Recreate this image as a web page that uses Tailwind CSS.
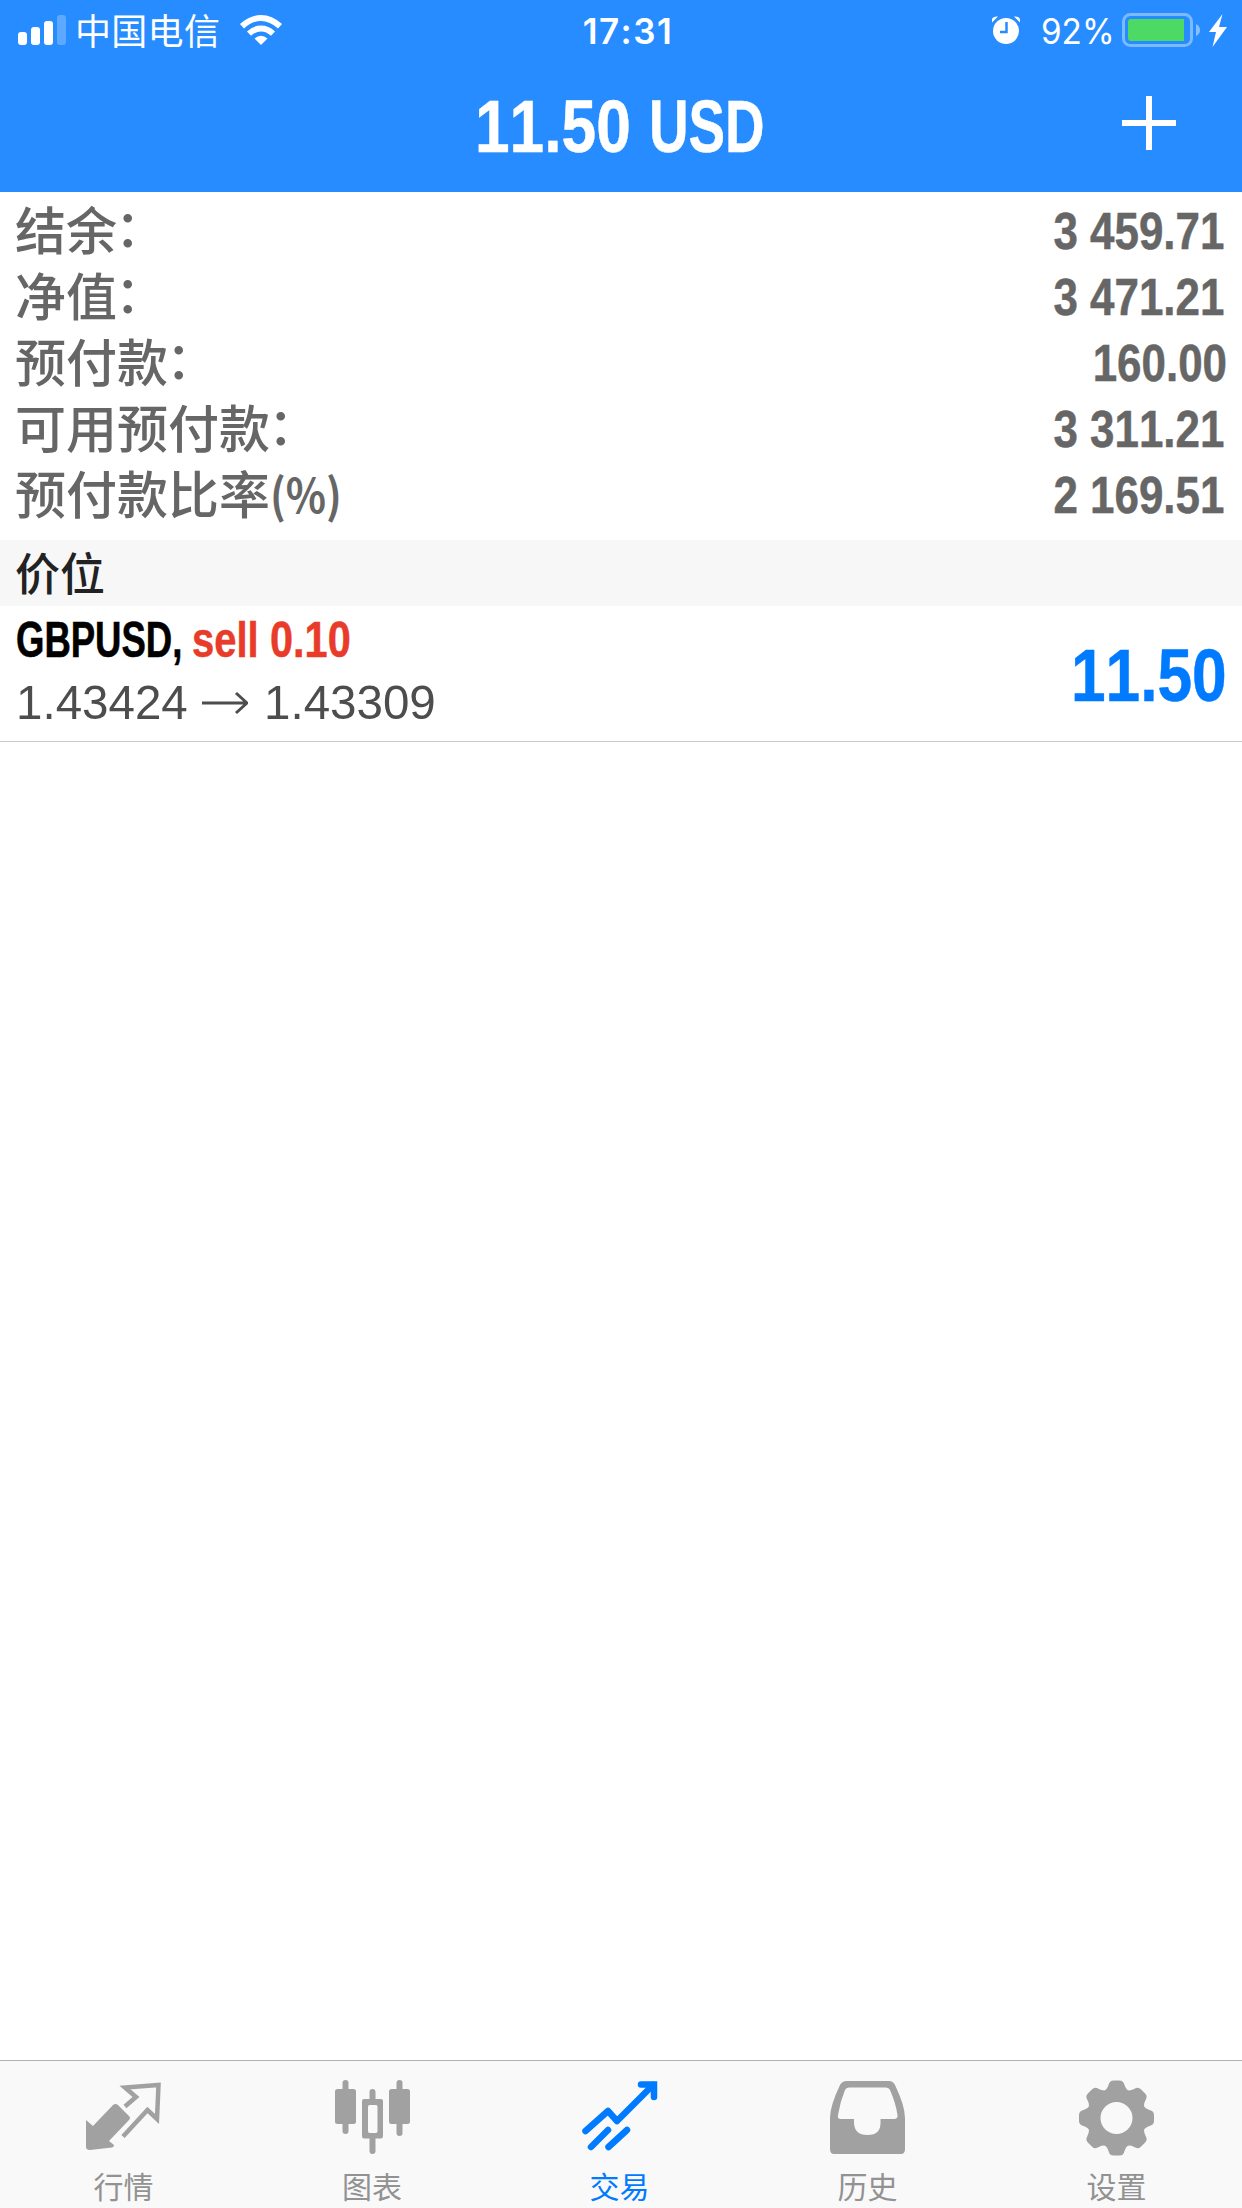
<!DOCTYPE html>
<html lang="zh-CN">
<head>
<meta charset="utf-8">
<title>交易</title>
<script src="https://cdn.jsdelivr.net/npm/@tailwindcss/browser@4"></script>
</head>
<body class="bg-white">
<div class="flex h-[2208px] w-[1242px] flex-col overflow-hidden bg-white font-['Liberation_Sans','Noto_Sans_CJK_SC',sans-serif] whitespace-nowrap [font-kerning:none]">
  <header class="h-[192px] bg-[#268cff] text-white">
    <div class="grid h-[60px] grid-cols-3 items-center">
      <div class="flex h-[60px] items-center pl-[18px]">
        <svg class="h-[60px] w-[48px]" viewBox="18 0 48 60" fill="#fff"><rect x="18" y="32" width="9" height="13" rx="3"/><rect x="31" y="27" width="9" height="18" rx="3"/><rect x="44" y="21" width="9" height="24" rx="3"/><rect x="57" y="15" width="9" height="30" rx="3" opacity=".25"/></svg>
        <span class="relative -top-[1px] ml-[9px] font-['Noto_Sans_CJK_SC',sans-serif] text-[36px] leading-[60px] font-normal tracking-[0.3px]">中国电信</span>
        <svg class="ml-[19px] h-[60px] w-[44px]" viewBox="239 0 44 60" fill="none" stroke="#fff" stroke-width="6"><path d="M242 26.300000000000004Q251 18 261 18T280 26.3"/><path d="M249 33.6Q254.500 28.500 261 28.500T273 33.600"/><path d="M254.500 38.500Q261 33 267.500 38.500L261 45Z" fill="#fff" stroke="none"/></svg>
      </div>
      <div class="text-center font-['Inter',sans-serif] text-[35px] leading-[60px] font-semibold"><span class="relative top-[1px] left-[7px] tracking-[1.5px]">17:31</span></div>
      <div class="flex h-[60px] items-center justify-end pr-[14px]">
        <svg class="h-[60px] w-[30px]" viewBox="991 0 30 60" fill="#fff"><circle cx="1006" cy="31" r="13"/><path d="M992 22.500V19Q993 16 998 16.500ZM1020 22.500V19Q1019 16 1014 16.500Z"/><path d="M1006.500 22V32H1000" fill="none" stroke="#268cff" stroke-width="2.500"/></svg>
        <span class="relative top-[1px] ml-[20px] w-[73px] font-['Inter',sans-serif] text-[35px] leading-[60px]"><span class="inline-block origin-left scale-x-[.95]">92%</span></span>
        <svg class="ml-[7px] h-[60px] w-[107px]" viewBox="1121 0 107 60"><rect x="1123.500" y="14.500" width="68" height="31" rx="7" fill="none" stroke="#fff" stroke-width="3" opacity=".4"/><rect x="1128" y="19" width="56" height="22" rx="3" fill="#4cd964"/><rect x="1180" y="19" width="4" height="22" fill="#4cd964"/><path d="M1196 24Q1200 26 1200 30T1196 36Z" fill="#fff" opacity=".45"/><path d="M1222.500 14L1209 32H1216L1212.500 47L1227 27H1219Z" fill="#fff"/></svg>
      </div>
    </div>
    <div class="flex h-[132px] justify-between pr-[66px] pl-[475px] font-bold">
      <h1 class="flex text-[75px] leading-[132px] [-webkit-text-stroke:0.5px_#fff]">
        <span class="w-[174px]"><span class="inline-block origin-left scale-x-[.83]">11.50</span></span>
        <span class="inline-block origin-left scale-x-[.73]">USD</span>
      </h1>
      <svg class="h-[132px] w-[54px]" viewBox="1122 60 54 132" stroke="#fff" stroke-width="6"><path d="M1149 96V150M1122 123H1176"/></svg>
    </div>
  </header>

  <section class="flex h-[348px] flex-col px-[15px] pt-[6px] font-['Noto_Sans_CJK_SC',sans-serif] text-[51px] leading-[60px] font-medium text-[#666]">
    <div class="flex h-[66px] justify-between"><span>结余<span class="relative -top-[3px] -left-[2px]">：</span></span><span class="relative right-[3px] inline-block origin-right scale-x-[.845] font-['Liberation_Sans'] text-[52px] leading-[67px] font-bold [-webkit-text-stroke:0.5px_#666]">3 459.71</span></div>
    <div class="flex h-[66px] justify-between"><span>净值<span class="relative -top-[3px] -left-[2px]">：</span></span><span class="relative right-[3px] inline-block origin-right scale-x-[.845] font-['Liberation_Sans'] text-[52px] leading-[67px] font-bold [-webkit-text-stroke:0.5px_#666]">3 471.21</span></div>
    <div class="flex h-[66px] justify-between"><span>预付款<span class="relative -top-[3px] -left-[2px]">：</span></span><span class="inline-block origin-right scale-x-[.845] font-['Liberation_Sans'] text-[52px] leading-[67px] font-bold [-webkit-text-stroke:0.5px_#666]">160.00</span></div>
    <div class="flex h-[66px] justify-between"><span>可用预付款<span class="relative -top-[3px] -left-[2px]">：</span></span><span class="relative right-[3px] inline-block origin-right scale-x-[.845] font-['Liberation_Sans'] text-[52px] leading-[67px] font-bold [-webkit-text-stroke:0.5px_#666]">3 311.21</span></div>
    <div class="flex h-[66px] justify-between"><span>预付款比率<span class="relative -top-px inline-block origin-left scale-x-[.89] text-[47px] font-bold">(%)</span></span><span class="relative right-[3px] inline-block origin-right scale-x-[.845] font-['Liberation_Sans'] text-[52px] leading-[67px] font-bold [-webkit-text-stroke:0.5px_#666]">2 169.51</span></div>
  </section>

  <h2 class="h-[66px] bg-[#f7f7f7] px-[15px] font-['Noto_Sans_CJK_SC',sans-serif] text-[45px] leading-[64px] font-medium text-[#222]">价位</h2>

  <div class="flex h-[136px] justify-between border-b border-[#c8c7cc] px-[15px]">
    <div class="flex flex-col">
      <div class="flex h-[66px] text-[50px] leading-[69px] font-bold">
        <span class="w-[177px] pl-px [-webkit-text-stroke:0.6px_#000]"><span class="inline-block origin-left scale-x-[.73] text-black">GBPUSD,</span></span>
        <span class="w-[78px] text-[#e83b2a] [-webkit-text-stroke:0.5px_#e83b2a]"><span class="inline-block origin-left scale-x-[.8]">sell</span></span>
        <span class="inline-block origin-left scale-x-[.83] text-[#e83b2a] [-webkit-text-stroke:0.5px_#e83b2a]">0.10</span>
      </div>
      <div class="flex h-[60px] items-center text-[49px] leading-[62px] text-[#4d4d4d]">
        <span class="w-[187px] pl-px"><span class="inline-block origin-left scale-x-[.97]">1.43424</span></span>
        <svg class="h-[60px] w-[46px]" viewBox="202 672 46 60" fill="none" stroke="#4d4d4d" stroke-width="3"><path d="M202 703H246M236 693L247 703L236 713"/></svg>
        <span class="ml-[16px] inline-block origin-left scale-x-[.97]">1.43309</span>
      </div>
    </div>
    <span class="inline-block origin-right scale-x-[.83] text-[75px] leading-[138px] font-bold text-[#007aff] [-webkit-text-stroke:0.5px_#007aff]">11.50</span>
  </div>

  <main class="flex-1"></main>

  <nav class="flex h-[148px] border-t border-[#b2b2b2] bg-[#f9f9f9] font-['Noto_Sans_CJK_SC',sans-serif] text-[30px] leading-[50px] font-normal text-[#929292]">
    <div class="flex w-[247px] flex-col items-center">
      <svg class="mt-[15px] h-[84px] w-[84px] shrink-0" viewBox="82 2076 84 84"><path d="M86 2120L93 2126L113 2105Q115.500 2103 118 2105L129 2116Q131 2118 129 2120L109 2141L114 2145Q114 2147 112 2147.500L90 2150Q86 2150 86 2147Z" fill="#a1a1a1"/><path d="M125 2106.500L136 2097L125 2087.500L158.500 2085L157 2119L147.500 2110L123 2136.500" fill="none" stroke="#a1a1a1" stroke-width="4.500"/></svg>
      <span>行情</span>
    </div>
    <div class="flex w-[250px] flex-col items-center">
      <svg class="mt-[15px] h-[84px] w-[84px] shrink-0" viewBox="330 2076 84 84" fill="#a1a1a1"><rect x="335" y="2089" width="21" height="35" rx="2.500"/><rect x="342.500" y="2080" width="6" height="54" rx="3"/><rect x="389" y="2089" width="21" height="35" rx="2.500"/><rect x="396.500" y="2080" width="6" height="56" rx="3"/><path d="M369.500 2100V2092Q369.500 2089 372.500 2089T375.500 2092V2100ZM369.500 2137V2151Q369.500 2154 372.500 2154T375.500 2151V2137Z"/><path fill-rule="evenodd" d="M364 2099H381Q383 2099 383 2101V2136Q383 2138.500 381 2138.500H364Q362 2138.500 362 2136V2101Q362 2099 364 2099ZM369.500 2105Q368 2105 368 2107V2131Q368 2133 369.500 2133H376Q377.500 2133 377.500 2131V2107Q377.500 2105 376 2105Z"/></svg>
      <span>图表</span>
    </div>
    <div class="flex w-[245px] flex-col items-center text-[#007aff]">
      <svg class="mt-[15px] h-[84px] w-[84px] shrink-0" viewBox="578 2076 84 84" fill="none" stroke="#007aff" stroke-width="6.500" stroke-linecap="round"><path d="M585.500 2131L608 2111L617 2121L653 2085" stroke-linejoin="round"/><path d="M641 2084.500H654V2097"/><path d="M591 2147L608 2130M608.500 2147L627 2130"/></svg>
      <span>交易</span>
    </div>
    <div class="flex w-[251px] flex-col items-center">
      <svg class="mt-[15px] h-[84px] w-[84px] shrink-0" viewBox="826 2076 84 84" fill="#a1a1a1"><path fill-rule="evenodd" d="M847 2081H889Q893 2081 895 2085Q905 2106 905 2118V2149Q905 2154 901 2154H834Q830 2154 830 2149V2118Q830 2106 840 2085Q842 2081 847 2081ZM849 2087.500Q846 2087.500 845 2090Q840 2102 838 2115Q837 2119 841 2119H854V2122Q854 2135 867.500 2135T880.500 2122V2119H894Q898 2119 897.500 2115Q896 2104 890 2090Q889 2087.500 886 2087.500Z"/></svg>
      <span>历史</span>
    </div>
    <div class="flex w-[247px] flex-col items-center">
      <svg class="mt-[15px] h-[84px] w-[84px] shrink-0" viewBox="-41.500 -42 84 84"><g fill="#a1a1a1"><circle r="29"/><path id="t" d="M-14 -26Q-9.500 -28 -8 -33Q-7 -37.500 -3 -37.500H3Q7 -37.500 8 -33Q9.500 -28 14 -26V-12H-14Z"/><use href="#t" transform="rotate(45)"/><use href="#t" transform="rotate(90)"/><use href="#t" transform="rotate(135)"/><use href="#t" transform="rotate(180)"/><use href="#t" transform="rotate(225)"/><use href="#t" transform="rotate(270)"/><use href="#t" transform="rotate(315)"/></g><circle r="16" fill="#f9f9f9"/></svg>
      <span>设置</span>
    </div>
  </nav>
</div>
</body>
</html>
